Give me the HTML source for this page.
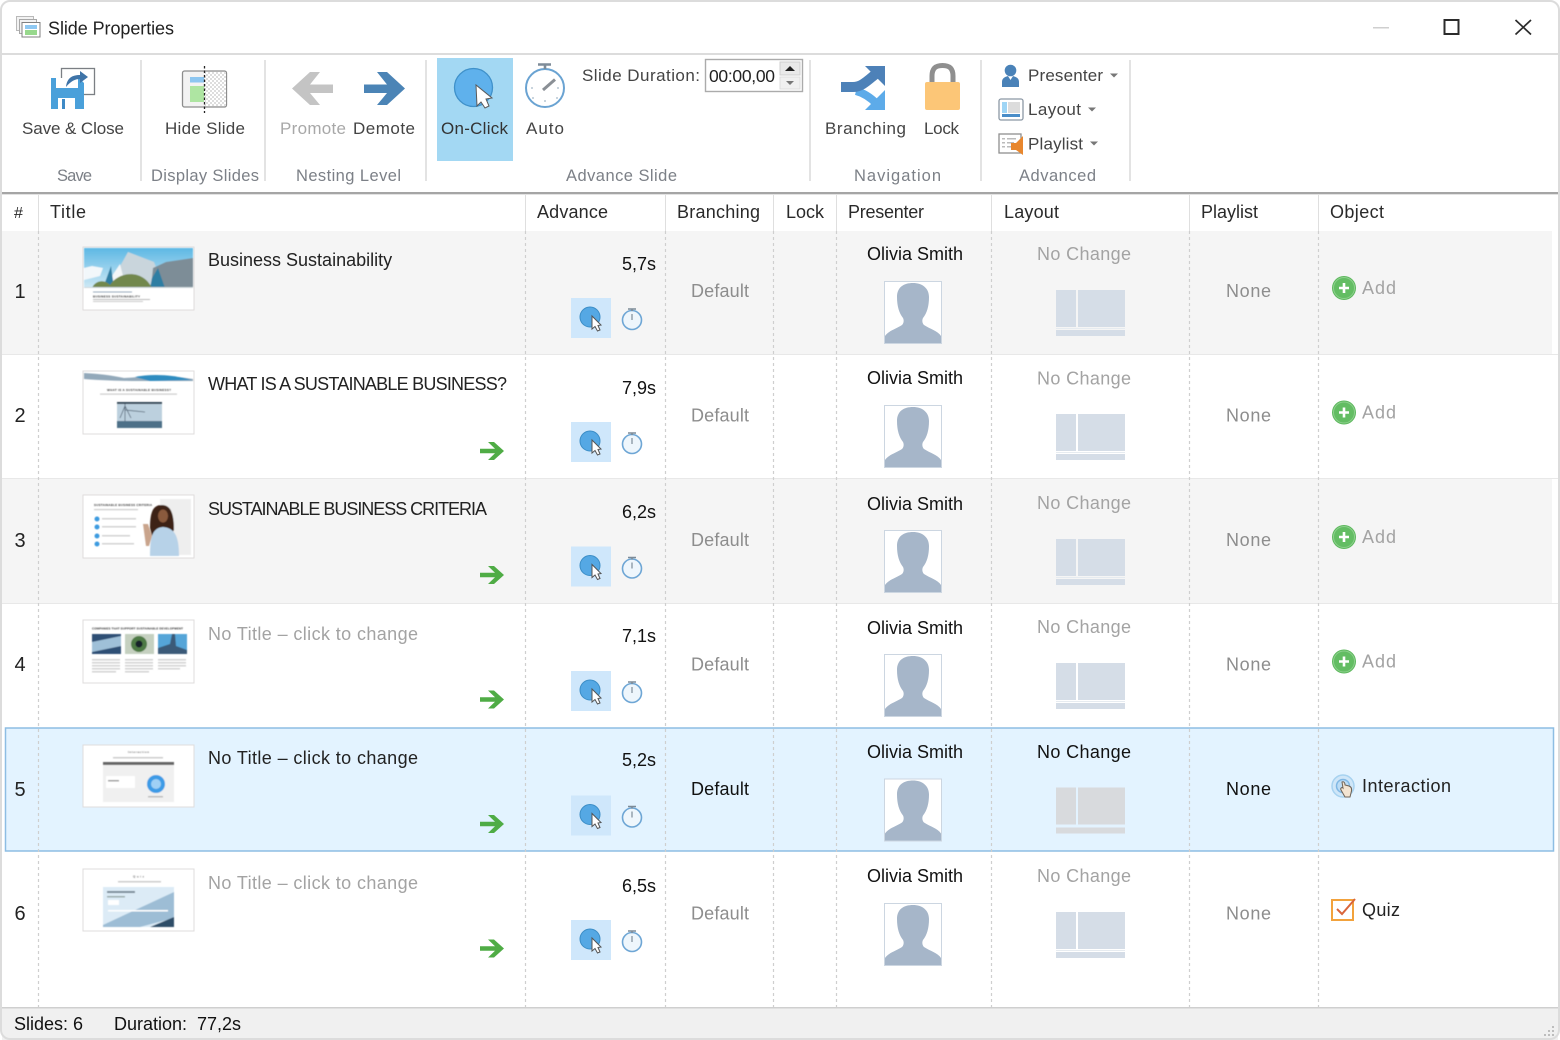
<!DOCTYPE html>
<html><head><meta charset="utf-8"><title>Slide Properties</title>
<style>
html,body{margin:0;padding:0;background:#fff;width:1560px;height:1040px;overflow:hidden}
svg{display:block}
text{font-family:"Liberation Sans",sans-serif;font-size:18px;fill:#222}
.rb{font-size:17px;fill:#444}
.gl{font-size:16.5px;fill:#7c8087}
.hd{fill:#2a2a2a}
.nm{font-size:20px;text-anchor:middle;fill:#222}
.k{fill:#111}
.g{fill:#8d8d8d}
.l{fill:#a3a3a3}
.tn{font-size:4px;font-weight:bold;fill:#333}
</style></head><body>
<svg width="1560" height="1040" viewBox="0 0 1560 1040" xmlns="http://www.w3.org/2000/svg">
<defs>
<filter id="b" x="-5%" y="-5%" width="110%" height="110%"><feGaussianBlur stdDeviation="0.5"/></filter>
<linearGradient id="sky" x1="0" y1="0" x2="0" y2="1"><stop offset="0" stop-color="#5db8e4"/><stop offset="1" stop-color="#cfe9f5"/></linearGradient>
<pattern id="chk" width="4" height="4" patternUnits="userSpaceOnUse"><rect width="4" height="4" fill="#fff"/><rect width="2" height="2" fill="#ddd"/><rect x="2" y="2" width="2" height="2" fill="#ddd"/></pattern>
<g id="adv">
  <rect x="571" y="298" width="40" height="40" fill="#cfe7fb"/>
  <circle cx="590" cy="317" r="10" fill="#55a8e4" stroke="#3b8dc6"/>
  <path d="M592 316 L592 329 L595 326.500 L597.500 331 L600 330 L598 325.500 L601 325 Z" fill="#fff" stroke="#555" stroke-width="1"/>
  <circle cx="632" cy="320" r="9.500" fill="#eef6fc" stroke="#6ea6d5" stroke-width="1.600"/>
  <path d="M628 309H636M632 309V311" stroke="#7d8b98" stroke-width="1.600"/>
  <path d="M632 314V320" stroke="#7d8b98" stroke-width="1.200"/>
</g>
<path id="garrow" d="M480 448.700H495L488 442H494L504 451L494 460H488L495 453.300H480Z" fill="#4fac45"/>
<g id="avatar">
  <rect x="884.500" y="281.500" width="57" height="62" fill="#fff" stroke="#ccd6e1"/>
  <path d="M885 343V336C888 331 896 329 902 325C904 323 904 320 903 318C899 313 897 306 897 297C897 287 904 283 913 283C922 283 929 288 929 297C929 306 927 313 923 318C922 320 922 323 924 325C930 329 938 331 941 336V343Z" fill="#a6b6c9"/>
</g>
<g id="layout" fill="#d5dde7">
  <rect x="1056" y="290" width="20" height="37"/><rect x="1078" y="290" width="47" height="37"/><rect x="1056" y="330" width="69" height="6"/><rect x="1056" y="328" width="69" height="1" fill="#e6ebf0"/>
</g>
<g id="plus">
  <circle cx="1344" cy="288" r="12" fill="#5cb85c"/><circle cx="1344" cy="288" r="10.500" fill="#63bd63" stroke="#8ed08e"/>
  <path d="M1339 288H1349M1344 283V293" stroke="#fff" stroke-width="2.600"/>
</g>
<g id="th1">
  <rect x="83" y="247" width="111" height="63" fill="#fff" stroke="#dfdcdc"/>
  <g filter="url(#b)">
  <rect x="84" y="248" width="109" height="40" fill="url(#sky)"/>
  <path d="M84 268L92 266L103 268L100 276L84 280Z" fill="#f2f7fa"/>
  <path d="M108 288L128 252L154 262L164 288Z" fill="#c9d5dc"/>
  <path d="M112 276L120 264L126 288H110Z" fill="#f3f6f8"/>
  <path d="M103 288L111 266L114 288Z" fill="#2f7ea3"/>
  <path d="M151 288L153 268L166 262L193 258V288Z" fill="#7d8d97"/>
  <path d="M152 278L158 268L165 288H150Z" fill="#2f7ea3"/>
  <path d="M92 288C96 279 106 280 110 285C118 272 142 268 152 288Z" fill="#72884e"/>
  <rect x="84" y="287" width="109" height="1" fill="#cfd8dc"/>
  <rect x="93" y="291.500" width="39" height="1" fill="#9ab"/>
  <text class="tn" x="93" y="297.500" textLength="47" style="font-size:3px">BUSINESS SUSTAINABILITY</text>
  <rect x="93" y="299" width="57" height="1" fill="#bbb"/><rect x="93" y="301" width="50" height="1" fill="#ccc"/>
  </g>
</g>
<g id="th2">
  <rect x="83" y="371" width="111" height="63" fill="#fff" stroke="#dfdcdc"/>
  <g filter="url(#b)">
  <path d="M84 373C100 374 110 375 124 378C140 377 165 374 193 379V381H150C130 381 110 381 84 379Z" fill="#93a9ba"/>
  <path d="M135 377C150 374 170 374 192 380L150 381Z" fill="#2e8cc0"/>
  <text class="tn" x="107" y="391" textLength="64" style="font-size:3px">WHAT IS A SUSTAINABLE BUSINESS?</text>
  <rect x="100" y="393.500" width="77" height="1.200" fill="#ccc"/>
  <rect x="117" y="402" width="45" height="26" fill="#bcd0de"/>
  <rect x="117" y="402" width="45" height="2" fill="#345"/>
  <rect x="117" y="421" width="45" height="7" fill="#4d6f88"/>
  <path d="M125 404V421M120 418L125 406L131 418M125 410L145 412" stroke="#567" fill="none" stroke-width=".8"/>
  </g>
</g>
<g id="th3">
  <rect x="83" y="495" width="111" height="63" fill="#fff" stroke="#dfdcdc"/>
  <g filter="url(#b)">
  <rect x="160" y="499" width="31" height="56" fill="#eee"/>
  <text class="tn" x="94" y="506" textLength="58" style="font-size:3px">SUSTAINABLE BUSINESS CRITERIA</text>
  <rect x="94" y="509" width="44" height="1.200" fill="#ccc"/>
  <g fill="#3d9be0"><circle cx="97" cy="519" r="2.500"/><circle cx="97" cy="527" r="2.500"/><circle cx="97" cy="536" r="2.500"/><circle cx="97" cy="544" r="2.500"/></g>
  <g fill="#d2d2d2"><rect x="102" y="518" width="34" height="1.500"/><rect x="102" y="526" width="34" height="1.500"/><rect x="102" y="535" width="28" height="1.500"/><rect x="102" y="543" width="32" height="1.500"/></g>
  <path d="M150 528C150 510 154 505 162 505C170 505 174 512 174 530L170 536H152Z" fill="#3d2418"/>
  <ellipse cx="163" cy="516" rx="5" ry="6.500" fill="#8a5a3c"/>
  <path d="M150 556C150 535 153 528 163 527C174 528 179 535 179 556Z" fill="#b7d2e8"/>
  <path d="M143 524h5l4 12-3 10h-3z" fill="#c9a48c"/>
  </g>
</g>
<g id="th4">
  <rect x="83" y="620" width="111" height="63" fill="#fff" stroke="#dfdcdc"/>
  <g filter="url(#b)">
  <text class="tn" x="92" y="629.500" textLength="91" style="font-size:3px">COMPANIES THAT SUPPORT SUSTAINABLE DEVELOPMENT</text>
  <rect x="92" y="634" width="29" height="20" fill="#2f4f74"/><path d="M92 642L121 636V646L92 652Z" fill="#9fc0d8"/>
  <rect x="125" y="634" width="29" height="20" fill="#c5d0c0"/><circle cx="139" cy="644" r="8" fill="#4e7a44"/><circle cx="139" cy="644" r="3.500" fill="#15202c"/>
  <rect x="158" y="634" width="29" height="20" fill="#55a5d8"/><path d="M158 654V648L170 644L172 634H175L176 646L187 650V654Z" fill="#3a5a78"/>
  <g fill="#d2d2d2"><rect x="92" y="659" width="28" height="1.500"/><rect x="92" y="662" width="28" height="1.500"/><rect x="92" y="665" width="28" height="1.500"/><rect x="92" y="668" width="28" height="1.500"/><rect x="92" y="671" width="24" height="1.500"/>
  <rect x="125" y="659" width="28" height="1.500"/><rect x="125" y="662" width="28" height="1.500"/><rect x="125" y="665" width="28" height="1.500"/><rect x="125" y="668" width="28" height="1.500"/><rect x="125" y="671" width="24" height="1.500"/>
  <rect x="158" y="659" width="28" height="1.500"/><rect x="158" y="662" width="28" height="1.500"/><rect x="158" y="665" width="28" height="1.500"/><rect x="158" y="668" width="22" height="1.500"/></g>
  </g>
</g>
<g id="th5">
  <rect x="83" y="745" width="111" height="62" fill="#fff" stroke="#dfdcdc"/>
  <g filter="url(#b)">
  <text class="tn" x="128" y="753" textLength="21" style="font-size:3px;fill:#777">Interaction</text>
  <rect x="113" y="757" width="50" height="1.500" fill="#ccc"/>
  <rect x="103" y="762" width="71" height="40" fill="#f0f0f0"/>
  <rect x="103" y="762" width="71" height="3" fill="#666"/>
  <rect x="106" y="776" width="29" height="12" fill="#fff"/>
  <rect x="108" y="780" width="11" height="1.500" fill="#999"/>
  <circle cx="156" cy="784" r="9" fill="#3d9be6"/><circle cx="156" cy="784" r="5" fill="#9fd0f5"/>
  <rect x="148" y="796" width="15" height="1.500" fill="#bbb"/>
  </g>
</g>
<g id="th6">
  <rect x="83" y="869" width="111" height="62" fill="#fff" stroke="#dfdcdc"/>
  <g filter="url(#b)">
  <text class="tn" x="133" y="877.500" textLength="11" style="font-size:3px;fill:#777">Quiz</text>
  <rect x="118" y="881" width="43" height="1.500" fill="#ccc"/>
  <rect x="103" y="887" width="71" height="40" fill="#dcebf6"/>
  <path d="M103 925L174 892V918L140 927H103Z" fill="#9dbdd5"/>
  <path d="M150 927L174 917V927Z" fill="#2e4e68"/>
  <rect x="107" y="891" width="28" height="2" fill="#7a8a98"/><rect x="107" y="896" width="18" height="1.500" fill="#9aa"/>
  <rect x="108" y="900" width="11" height="5" fill="#fff"/><rect x="108" y="910" width="60" height="1.500" fill="#fff"/>
  </g>
</g>
</defs>

<rect width="1560" height="1040" fill="#fff"/>

<!-- title bar -->
<g>
  <rect x="16.500" y="16.500" width="17" height="14" fill="#f2f2f2" stroke="#b9b9b9"/>
  <rect x="19.500" y="19.500" width="17" height="14" fill="#f2f2f2" stroke="#a8a8a8"/>
  <rect x="22" y="22.500" width="18" height="14.500" fill="#fff" stroke="#808080"/>
  <rect x="25" y="25" width="12" height="4" fill="#8ec8f2"/><rect x="25" y="30" width="12" height="5" fill="#97d88c"/>
</g>
<text x="48" y="34.500" textLength="126">Slide Properties</text>
<rect x="1373" y="27" width="16" height="1.500" fill="#cfcfcf"/>
<rect x="1444.500" y="20" width="14" height="14" fill="none" stroke="#2b2b2b" stroke-width="2"/>
<path d="M1515.500 20L1531 34.500M1531 20L1515.500 34.500" stroke="#2b2b2b" stroke-width="1.700"/>
<rect x="0" y="53" width="1560" height="2" fill="#dcdcdc"/>

<!-- ribbon separators -->
<g fill="#e3e3e3"><rect x="140" y="60" width="2" height="121"/><rect x="264" y="60" width="2" height="121"/><rect x="425" y="60" width="2" height="121"/><rect x="809" y="60" width="2" height="121"/><rect x="980" y="60" width="2" height="121"/><rect x="1129" y="60" width="2" height="121"/></g>

<!-- Save -->
<rect x="61.500" y="68.500" width="33" height="26" fill="#fff" stroke="#7b7f84" stroke-width="1.300"/>
<path d="M51 78H79L84 83V109H51Z" fill="#4aa0da"/>
<rect x="56" y="78" width="22" height="10" fill="#fff"/>
<rect x="58" y="98" width="17" height="11" fill="#fff"/><rect x="62" y="99" width="3" height="10" fill="#3e8ac6"/>
<path d="M66 87C67 78 72 75 80 75V71L88 77L80 83V79C75 79 71 81 66 87Z" fill="#3f74a8"/>
<text class="rb" x="22" y="134" textLength="102">Save &amp; Close</text>
<text class="gl" x="57" y="181" textLength="35">Save</text>

<!-- Hide slide -->
<rect x="182.500" y="71" width="44" height="36" rx="2" fill="#f3f3f3" stroke="#8d8d8d" stroke-width="1.300"/>
<rect x="205" y="72" width="21" height="34" fill="url(#chk)"/>
<rect x="190" y="77" width="14" height="5.500" fill="#8dc6f0"/>
<rect x="190" y="86" width="14" height="16" fill="#aee5a2"/>
<path d="M204.500 66V113" stroke="#222" stroke-width="1.300" stroke-dasharray="2.500 2"/>
<text class="rb" x="165" y="134" textLength="80">Hide Slide</text>
<text class="gl" x="151" y="181" textLength="108">Display Slides</text>

<!-- Nesting -->
<path d="M333 84.500V93H310L320 105H310L292 88.500L310 72H320L310 84.500Z" fill="#c4c4c4"/>
<path d="M364 84.500V93H387L377 105H387L405 88.500L387 72H377L387 84.500Z" fill="#4b84b6"/>
<text class="rb" x="280" y="134" textLength="66" style="fill:#a8a8a8">Promote</text>
<text class="rb" x="353" y="134" textLength="62">Demote</text>
<text class="gl" x="296" y="181" textLength="105">Nesting Level</text>

<!-- Advance -->
<rect x="437" y="58" width="76" height="103" fill="#a3d8f3"/>
<circle cx="473.500" cy="87.500" r="19" fill="#5fb1ec" stroke="#3f91ca" stroke-width="1.300"/>
<path d="M476 85L477 106L481 102L485 108L489 106L486 99L492 98Z" fill="#fff" stroke="#5a5a5a" stroke-width="1"/>
<text class="rb" x="441" y="134" textLength="67" style="fill:#333">On-Click</text>
<circle cx="545" cy="88" r="19" fill="#fff" stroke="#6aa3d2" stroke-width="2"/>
<path d="M538 64.500H551M545 64.500V69" stroke="#7e8c99" stroke-width="2.600"/>
<path d="M543 90L555 79.500" stroke="#8a8f95" stroke-width="3"/>
<g fill="#b8c6d2"><circle cx="532" cy="88" r="1"/><circle cx="558" cy="88" r="1"/><circle cx="545" cy="101" r="1"/><circle cx="533" cy="98" r="1"/><circle cx="557" cy="98" r="1"/></g>
<text class="rb" x="526" y="134" textLength="38">Auto</text>
<text class="rb" x="582" y="81" textLength="118">Slide Duration:</text>
<rect x="705.500" y="59.500" width="97" height="32" fill="#fff" stroke="#ababab" stroke-width="1.400"/>
<text x="709" y="82" textLength="66" style="font-size:17.500px;fill:#222">00:00,00</text>
<rect x="780" y="62" width="20" height="13" fill="#e9e9e9" stroke="#cfcfcf"/><rect x="780" y="77" width="20" height="12" fill="#f0f0f0" stroke="#dedede"/>
<path d="M785 71L790 66L795 71Z" fill="#222"/><path d="M786 81H794L790 85Z" fill="#777"/>
<text class="gl" x="566" y="181" textLength="111">Advance Slide</text>

<!-- Nav -->
<path d="M856 91C864 93 870 97 877 104" fill="none" stroke="#5dabe9" stroke-width="8"/>
<path d="M885 90V110H865Z" fill="#5dabe9"/>
<path d="M841 87H853C862 87 868 80 877 73" fill="none" stroke="#4d81b8" stroke-width="10"/>
<path d="M865 66H885V86Z" fill="#4d81b8"/>
<text class="rb" x="825" y="134" textLength="81">Branching</text>
<path d="M932 84V76C932 68 936 65.500 942.500 65.500C949 65.500 953 68 953 76V84" fill="none" stroke="#8f8f8f" stroke-width="5"/>
<rect x="925" y="82" width="35" height="28" rx="2" fill="#fcc677"/>
<text class="rb" x="924" y="134" textLength="35">Lock</text>
<text class="gl" x="854" y="181" textLength="87">Navigation</text>

<!-- Advanced -->
<circle cx="1010.500" cy="70.500" r="5.800" fill="#4a82b8"/>
<path d="M1002 87V82C1002 78 1005 77 1008 76L1010.500 80L1013 76C1016 77 1019 78 1019 82V87Z" fill="#4a82b8"/>
<text class="rb" x="1028" y="81" textLength="75">Presenter</text>
<path d="M1110 73.500H1118L1114 77.500Z" fill="#777"/>
<rect x="999" y="99" width="24" height="21" rx="2" fill="#fff" stroke="#8b98a5" stroke-width="1.300"/>
<rect x="1002" y="102" width="5" height="11" fill="#9fd5f5"/><rect x="1008" y="102" width="12" height="11" fill="#dcdcdc"/><rect x="1002" y="114" width="18" height="3" fill="#4a8dc8"/>
<text class="rb" x="1028" y="115" textLength="53">Layout</text>
<path d="M1088 107.500H1096L1092 111.500Z" fill="#777"/>
<rect x="999" y="134" width="22" height="19" fill="#fff" stroke="#8f8f8f" stroke-width="1.300"/>
<g fill="#bbb"><rect x="1002" y="138" width="3" height="1.500"/><rect x="1007" y="138" width="9" height="1.500"/><rect x="1002" y="142" width="3" height="1.500"/><rect x="1007" y="142" width="7" height="1.500"/><rect x="1002" y="146" width="3" height="1.500"/><rect x="1007" y="146" width="5" height="1.500"/></g>
<path d="M1011 143H1016L1023 136V155L1016 150H1011Z" fill="#e8872e"/>
<text class="rb" x="1028" y="149.500" textLength="55">Playlist</text>
<path d="M1090 141.500H1098L1094 145.500Z" fill="#777"/>
<text class="gl" x="1019" y="181" textLength="77">Advanced</text>

<rect x="2" y="192" width="1556" height="2" fill="#a5a5a5"/>
<rect x="2" y="194" width="1556" height="1" fill="#e2e2e2"/>

<!-- header -->
<g fill="#dfdfdf"><rect x="38" y="195" width="1" height="36"/><rect x="525" y="195" width="1" height="36"/><rect x="665" y="195" width="1" height="36"/><rect x="773" y="195" width="1" height="36"/><rect x="836" y="195" width="1" height="36"/><rect x="991" y="195" width="1" height="36"/><rect x="1189" y="195" width="1" height="36"/><rect x="1318" y="195" width="1" height="36"/></g>
<text class="hd" x="14" y="218" style="font-size:16px">#</text>
<text class="hd" x="50" y="218" textLength="36">Title</text>
<text class="hd" x="537" y="218" textLength="71">Advance</text>
<text class="hd" x="677" y="218" textLength="83">Branching</text>
<text class="hd" x="786" y="218" textLength="38">Lock</text>
<text class="hd" x="848" y="218" textLength="76">Presenter</text>
<text class="hd" x="1004" y="218" textLength="55">Layout</text>
<text class="hd" x="1201" y="218" textLength="57">Playlist</text>
<text class="hd" x="1330" y="218" textLength="54">Object</text>

<!-- row backgrounds -->
<rect x="2" y="231" width="1550" height="123" fill="#f5f5f5"/>
<rect x="2" y="354" width="1556" height="1" fill="#e8e8e8"/>
<rect x="2" y="478" width="1556" height="1" fill="#e8e8e8"/>
<rect x="2" y="479" width="1550" height="124" fill="#f5f5f5"/>
<rect x="2" y="603" width="1556" height="1" fill="#e8e8e8"/>
<rect x="5.500" y="728" width="1548" height="123" fill="#e3f3ff" stroke="#8dbde3" stroke-width="1.500"/>

<!-- dashed columns -->
<g stroke="#cfcfcf" stroke-width="1.200" stroke-dasharray="3 3">
<path d="M38.500 231V1007M525.500 231V1007M665.500 231V1007M773.500 231V1007M836.500 231V1007M991.500 231V1007M1189.500 231V1007M1318.500 231V1007"/>
</g>

<!-- ROW 1 -->
<text class="nm" x="20" y="298">1</text>
<use href="#th1"/>
<text x="208" y="266">Business Sustainability</text>
<text class="k" x="656" y="270" text-anchor="end">5,7s</text>
<use href="#adv"/>
<text class="g" x="691" y="297" textLength="58">Default</text>
<text class="k" x="915" y="260" text-anchor="middle">Olivia Smith</text>
<use href="#avatar"/>
<text class="l" x="1037" y="260" textLength="94">No Change</text>
<use href="#layout"/>
<text class="g" x="1226" y="297" textLength="45">None</text>
<use href="#plus"/>
<text class="l" x="1362" y="294" textLength="34">Add</text>

<!-- ROW 2 -->
<text class="nm" x="20" y="422">2</text>
<use href="#th2"/>
<text x="208" y="390" textLength="299">WHAT IS A SUSTAINABLE BUSINESS?</text>
<use href="#garrow"/>
<text class="k" x="656" y="394" text-anchor="end">7,9s</text>
<use href="#adv" y="124"/>
<text class="g" x="691" y="421.500" textLength="58">Default</text>
<text class="k" x="915" y="384" text-anchor="middle">Olivia Smith</text>
<use href="#avatar" y="124"/>
<text class="l" x="1037" y="384.500" textLength="94">No Change</text>
<use href="#layout" y="124"/>
<text class="g" x="1226" y="421.500" textLength="45">None</text>
<use href="#plus" y="124.500"/>
<text class="l" x="1362" y="418.500" textLength="34">Add</text>

<!-- ROW 3 -->
<text class="nm" x="20" y="547">3</text>
<use href="#th3"/>
<text x="208" y="515" textLength="279">SUSTAINABLE BUSINESS CRITERIA</text>
<use href="#garrow" y="124"/>
<text class="k" x="656" y="518" text-anchor="end">6,2s</text>
<use href="#adv" y="248.500"/>
<text class="g" x="691" y="546" textLength="58">Default</text>
<text class="k" x="915" y="510" text-anchor="middle">Olivia Smith</text>
<use href="#avatar" y="249"/>
<text class="l" x="1037" y="509" textLength="94">No Change</text>
<use href="#layout" y="249"/>
<text class="g" x="1226" y="546" textLength="45">None</text>
<use href="#plus" y="249"/>
<text class="l" x="1362" y="543" textLength="34">Add</text>

<!-- ROW 4 -->
<text class="nm" x="20" y="671">4</text>
<use href="#th4"/>
<text class="l" x="208" y="640" textLength="210">No Title – click to change</text>
<use href="#garrow" y="248.500"/>
<text class="k" x="656" y="642" text-anchor="end">7,1s</text>
<use href="#adv" y="373"/>
<text class="g" x="691" y="670.500" textLength="58">Default</text>
<text class="k" x="915" y="634" text-anchor="middle">Olivia Smith</text>
<use href="#avatar" y="373"/>
<text class="l" x="1037" y="633" textLength="94">No Change</text>
<use href="#layout" y="373"/>
<text class="g" x="1226" y="670.500" textLength="45">None</text>
<use href="#plus" y="373.500"/>
<text class="l" x="1362" y="667.500" textLength="34">Add</text>

<!-- ROW 5 -->
<text class="nm" x="20" y="796">5</text>
<use href="#th5"/>
<text x="208" y="764" textLength="210">No Title – click to change</text>
<use href="#garrow" y="373"/>
<text class="k" x="656" y="766" text-anchor="end">5,2s</text>
<use href="#adv" y="497.500"/>
<text class="k" x="691" y="795" textLength="58">Default</text>
<text class="k" x="915" y="758" text-anchor="middle">Olivia Smith</text>
<use href="#avatar" y="497.500"/>
<text class="k" x="1037" y="758" textLength="94">No Change</text>
<g transform="translate(0 497.500)" fill="#d8dadd"><rect x="1056" y="290" width="20" height="37"/><rect x="1078" y="290" width="47" height="37"/><rect x="1056" y="330" width="69" height="6"/></g>
<text class="k" x="1226" y="795" textLength="45">None</text>
<circle cx="1343" cy="786" r="11" fill="#cfe6f8" stroke="#a7d2f0" stroke-width="1.500"/>
<circle cx="1343" cy="786" r="6.500" fill="#bcdcf5" stroke="#7fb7e4" stroke-width="1.500"/>
<path d="M1342 782C1344 781 1345 783 1345 785L1349 786C1352 787 1352 790 1351 793L1350 797H1345L1341 790C1340 788 1342 787 1343 788Z" fill="#f3e4d2" stroke="#6d6257"/>
<text x="1362" y="792" textLength="89">Interaction</text>

<!-- ROW 6 -->
<text class="nm" x="20" y="920">6</text>
<use href="#th6"/>
<text class="l" x="208" y="889" textLength="210">No Title – click to change</text>
<use href="#garrow" y="497.500"/>
<text class="k" x="656" y="892" text-anchor="end">6,5s</text>
<use href="#adv" y="622"/>
<text class="g" x="691" y="919.500" textLength="58">Default</text>
<text class="k" x="915" y="882" text-anchor="middle">Olivia Smith</text>
<use href="#avatar" y="622"/>
<text class="l" x="1037" y="882" textLength="94">No Change</text>
<use href="#layout" y="622"/>
<text class="g" x="1226" y="919.500" textLength="45">None</text>
<rect x="1332" y="900" width="21" height="20" fill="#fff" stroke="#f2a23c" stroke-width="2"/>
<path d="M1337 909L1342 914L1355 899" fill="none" stroke="#d9653a" stroke-width="2"/>
<text x="1362" y="916" textLength="38">Quiz</text>

<!-- status bar -->
<rect x="2" y="1008" width="1556" height="32" fill="#f0f0f0"/>
<rect x="2" y="1007" width="1556" height="1.500" fill="#cfcfcf"/>
<text class="k" x="14" y="1030">Slides: 6</text>
<text class="k" x="114" y="1030">Duration:</text>
<text class="k" x="197" y="1030">77,2s</text>
<g fill="#bdbdbd"><rect x="1552" y="1026" width="2" height="2"/><rect x="1548" y="1030" width="2" height="2"/><rect x="1552" y="1030" width="2" height="2"/><rect x="1544" y="1034" width="2" height="2"/><rect x="1548" y="1034" width="2" height="2"/><rect x="1552" y="1034" width="2" height="2"/></g>

<!-- window frame -->
<rect x="1" y="1" width="1558" height="1038" rx="9" fill="none" stroke="#dcdcdc" stroke-width="2"/>
</svg>
</body></html>
